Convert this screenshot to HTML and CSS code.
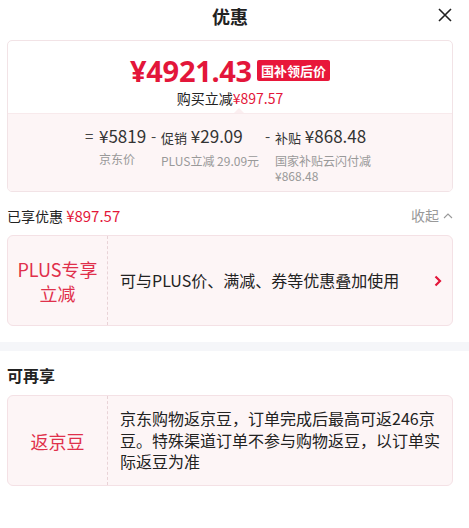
FILE: index.html
```html
<!DOCTYPE html>
<html lang="zh-CN">
<head>
    <meta charset="UTF-8">
    <meta name="viewport" content="width=device-width, initial-scale=1.0">
    <title>优惠</title>
    <link rel="stylesheet" href="styles.css">
</head>
<body>
    <div class="sheet">
        <header class="sheet-head">
            <h1>优惠</h1>
            <span class="close">
                <svg width="16" height="16" viewBox="0 0 16 16"><path d="M2 2 L14 14 M14 2 L2 14" stroke="#222" stroke-width="1.6" fill="none"/></svg>
            </span>
        </header>

        <!-- price summary -->
        <div class="summary">
            <div class="summary-top">
                <div class="final-price">
                    <span class="price">¥4921.43</span>
                    <span class="badge">国补领后价</span>
                </div>
                <div class="cut">购买立减<span class="red">¥897.57</span></div>
            </div>
            <div class="summary-bottom">
                <div class="calc-item">
                    <span class="sign first">=</span>
                    <div class="calc-body w1">
                        <div class="calc-val">¥5819</div>
                        <div class="calc-label">京东价</div>
                    </div>
                </div>
                <div class="calc-item">
                    <span class="sign">-</span>
                    <div class="calc-body w2">
                        <div class="calc-val"><small>促销</small> ¥29.09</div>
                        <div class="calc-label">PLUS立减 29.09元</div>
                    </div>
                </div>
                <div class="calc-item">
                    <span class="sign">-</span>
                    <div class="calc-body w3">
                        <div class="calc-val"><small>补贴</small> ¥868.48</div>
                        <div class="calc-label">国家补贴云闪付减 ¥868.48</div>
                    </div>
                </div>
            </div>
        </div>

        <div class="enjoyed">
            <div>已享优惠 <span class="red">¥897.57</span></div>
            <div class="fold">收起
                <svg width="10" height="7" viewBox="0 0 10 7"><path d="M1 6 L5 2 L9 6" stroke="#999" stroke-width="1.1" fill="none"/></svg>
            </div>
        </div>

        <div class="coupon">
            <div class="coupon-left">PLUS专享<br>立减</div>
            <div class="coupon-right">
                <span>可与PLUS价、满减、券等优惠叠加使用</span>
                <svg class="arrow" width="8" height="12" viewBox="0 0 8 12"><path d="M1.5 1.5 L6 6 L1.5 10.5" stroke="#e3163a" stroke-width="2.2" fill="none"/></svg>
            </div>
        </div>
    </div>

    <div class="band"></div>

    <div class="sheet">
        <h2 class="more-title">可再享</h2>
        <div class="coupon">
            <div class="coupon-left">返京豆</div>
            <div class="coupon-right">
                <span>京东购物返京豆，订单完成后最高可返246京豆。特殊渠道订单不参与购物返豆，以订单实际返豆为准</span>
            </div>
        </div>
    </div>
</body>
</html>
```

FILE: styles.css
```css
body {
    margin: 0;
    padding: 0;
    background-color: #fff;
    font-family: "Noto Sans CJK SC", "Noto Sans", sans-serif;
    color: #222;
}
.sheet {
    padding: 0 16px 0 7px;
}
.red {
    color: #e3163a;
}
.sheet-head {
    height: 32px;
    margin-bottom: 8px;
    display: flex;
    align-items: center;
    justify-content: center;
    position: relative;
}
.sheet-head h1 {
    margin: 0;
    font-size: 18px;
    font-weight: bold;
    line-height: 32px;
}
.close {
    position: absolute;
    right: 0;
    top: 7px;
    line-height: 0;
}
.summary {
    border: 1px solid #f2e3e6;
    border-radius: 5px;
    overflow: hidden;
}
.summary-top {
    padding: 11px 0 5px;
    text-align: center;
}
.final-price {
    display: flex;
    justify-content: center;
    align-items: center;
    height: 36px;
    gap: 5px;
}
.price {
    color: #e3163a;
    font-family: "Noto Sans", sans-serif;
    font-size: 29px;
    font-weight: bold;
    letter-spacing: -0.3px;
}
.badge {
    background-color: #e8173a;
    color: #fff;
    font-size: 13px;
    font-weight: bold;
    line-height: 21px;
    padding: 0 4px;
    border-radius: 2px;
}
.cut {
    font-size: 14px;
    line-height: 20px;
}
.summary-bottom {
    position: relative;
    background-color: #fdf5f6;
    border-top: 1px solid #f8eaec;
    padding: 10px 0 8px;
    display: flex;
    justify-content: center;
}
.summary-bottom::before {
    content: "";
    position: absolute;
    top: -6px;
    left: 226px;
    border-left: 5px solid transparent;
    border-right: 5px solid transparent;
    border-bottom: 5px solid #fbeef0;
}
.calc-item {
    display: flex;
}
.sign {
    width: 10px;
    font-size: 15px;
    line-height: 24px;
    color: #444;
}
.sign.first {
    width: 14px;
}
.calc-body.w1 { width: 52px; }
.calc-body.w2 { width: 104px; }
.calc-body.w3 { width: 100px; }
.calc-val {
    font-size: 17px;
    line-height: 24px;
    color: #333;
    white-space: nowrap;
}
.calc-val small {
    font-size: 13px;
}
.calc-label {
    margin-top: 3px;
    font-size: 12px;
    line-height: 15px;
    color: #999;
}
.enjoyed {
    margin-top: 13px;
    height: 20px;
    display: flex;
    justify-content: space-between;
    align-items: center;
    font-size: 14px;
}
.enjoyed .red {
    font-size: 15px;
}
.fold {
    color: #999;
    display: flex;
    align-items: center;
    gap: 4px;
}
.coupon {
    margin-top: 10px;
    height: 89px;
    display: flex;
    background-color: #fdf5f6;
    border: 1px solid #f4e1e5;
    border-radius: 6px;
}
.coupon-left {
    width: 99px;
    border-right: 1px dashed #e9d3d7;
    display: flex;
    align-items: center;
    justify-content: center;
    text-align: center;
    color: #e0304b;
    font-size: 18px;
    line-height: 24px;
}
.coupon-right {
    flex: 1;
    padding: 0 10px 0 12px;
    display: flex;
    align-items: center;
    justify-content: space-between;
    font-size: 16px;
    line-height: 21.5px;
    color: #222;
}
.arrow {
    flex-shrink: 0;
    margin-left: 8px;
}
.band {
    margin-top: 16px;
    height: 9px;
    background-color: #f5f6f9;
}
.more-title {
    margin: 13px 0 0;
    font-size: 16px;
    font-weight: bold;
    line-height: 22px;
}
.sheet .more-title + .coupon {
    margin-top: 9px;
}
```
